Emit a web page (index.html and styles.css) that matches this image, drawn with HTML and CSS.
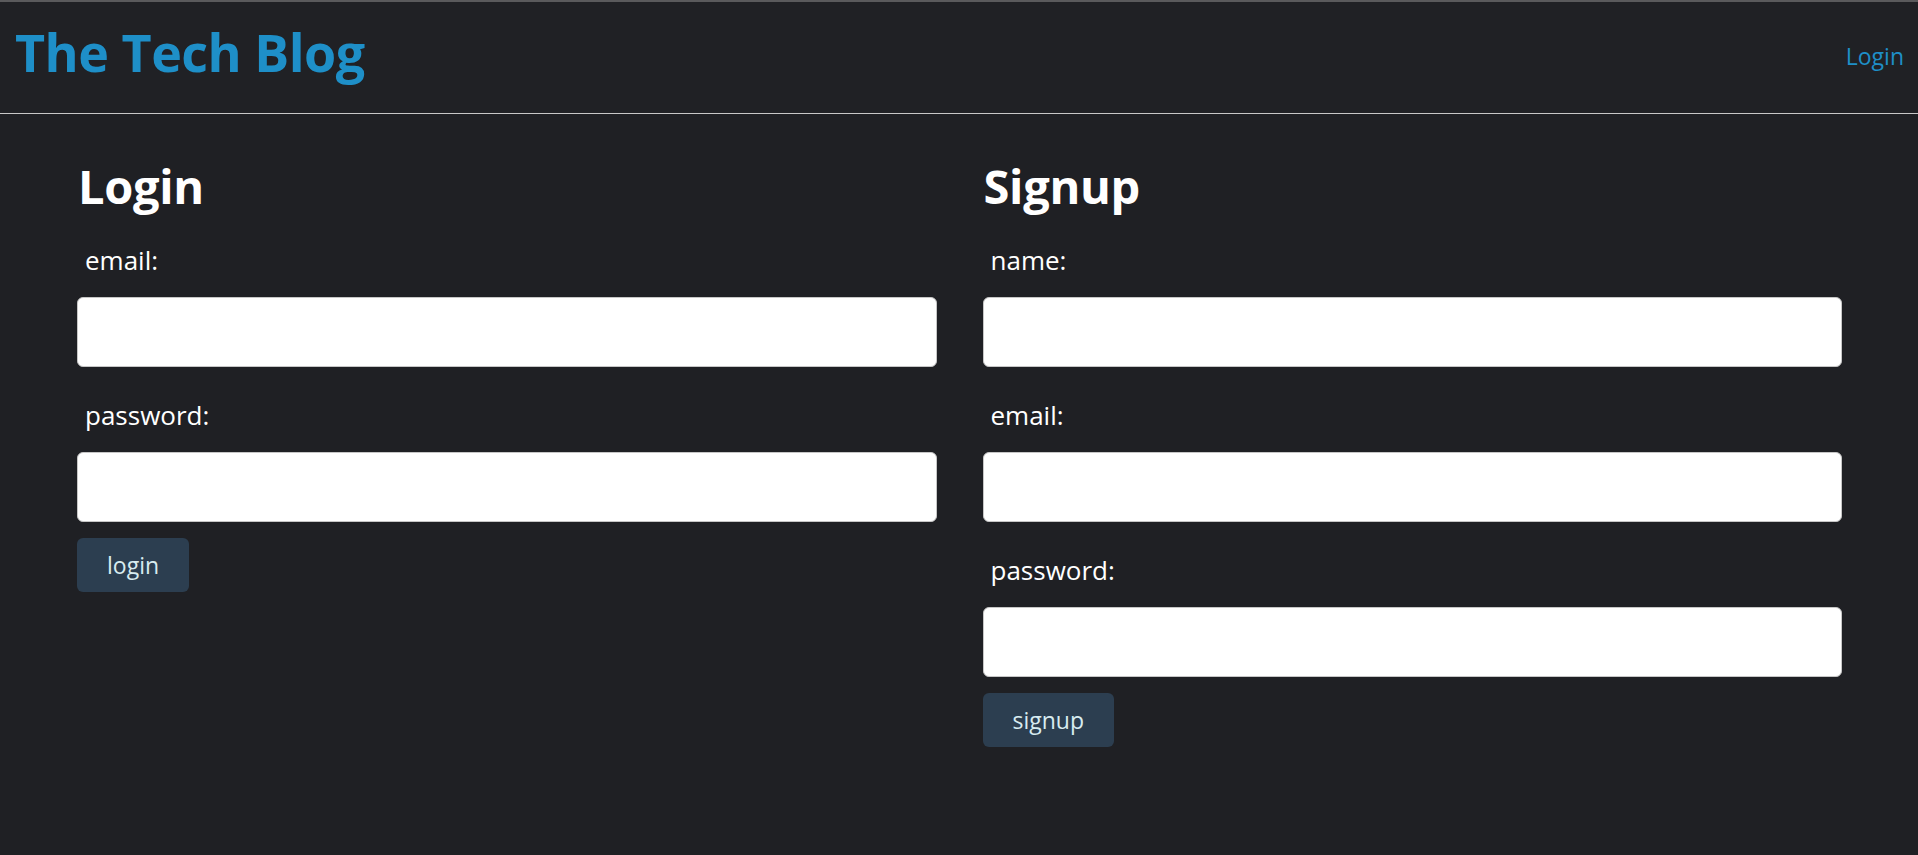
FILE: index.html
```html
<!DOCTYPE html>
<html lang="en">
<head>
<meta charset="utf-8">
<title>The Tech Blog</title>
<link rel="stylesheet" href="styles.css">
</head>
<body>
<header class="site-header">
  <h1 class="brand">The Tech Blog</h1>
  <nav class="nav"><a class="nav-link" href="#">Login</a></nav>
</header>
<main class="forms">
  <section class="panel">
    <h2 class="panel-title">Login</h2>
    <form class="form">
      <label class="field-label" for="login-email">email:</label>
      <input class="field-input" id="login-email" type="text">
      <label class="field-label" for="login-password">password:</label>
      <input class="field-input" id="login-password" type="password">
      <button class="btn" type="button">login</button>
    </form>
  </section>
  <section class="panel">
    <h2 class="panel-title">Signup</h2>
    <form class="form">
      <label class="field-label" for="signup-name">name:</label>
      <input class="field-input" id="signup-name" type="text">
      <label class="field-label" for="signup-email">email:</label>
      <input class="field-input" id="signup-email" type="text">
      <label class="field-label" for="signup-password">password:</label>
      <input class="field-input" id="signup-password" type="password">
      <button class="btn" type="button">signup</button>
    </form>
  </section>
</main>
</body>
</html>
```
FILE: styles.css
```css
* { box-sizing: border-box; }

html, body {
  margin: 0;
  padding: 0;
  background: #1f2024;
  color: #ffffff;
  font-family: "Open Sans", "Noto Sans", sans-serif;
}

.site-header {
  display: flex;
  align-items: center;
  justify-content: space-between;
  height: 114px;
  border-top: 2px solid #5a5a5c;
  border-bottom: 1px solid #c8c8c8;
  background: #202125;
  padding: 0 14px 4px 15px;
}

.brand {
  margin: 0 0 8px;
  font-size: 52px;
  font-weight: 700;
  color: #1e8fc8;
  letter-spacing: -0.5px;
}

.nav-link {
  color: #1e8fc8;
  text-decoration: none;
  font-size: 23px;
}

.forms {
  display: grid;
  grid-template-columns: 1fr 1fr;
  column-gap: 46px;
  padding: 0 76px 0 77px;
}

.panel-title {
  margin: 45px 0 0 1px;
  font-size: 47px;
  font-weight: 700;
  line-height: 54px;
  letter-spacing: -0.3px;
}

.form {
  display: flex;
  flex-direction: column;
  align-items: flex-start;
}

.field-label {
  font-size: 26px;
  padding-left: 8px;
  line-height: 32px;
  margin: 32px 0 21px;
}

.form .field-label:first-child {
  margin-top: 31px;
}

.field-input {
  width: 100%;
  height: 70px;
  border: 1px solid #c6c6c6;
  border-radius: 6px;
  background: #ffffff;
  margin: 0;
}

.btn {
  margin-top: 16px;
  height: 54px;
  padding: 0 30px;
  border: none;
  border-radius: 6px;
  background: #2c3e50;
  color: #d8ecf0;
  font-family: inherit;
  font-size: 23px;
}
```
